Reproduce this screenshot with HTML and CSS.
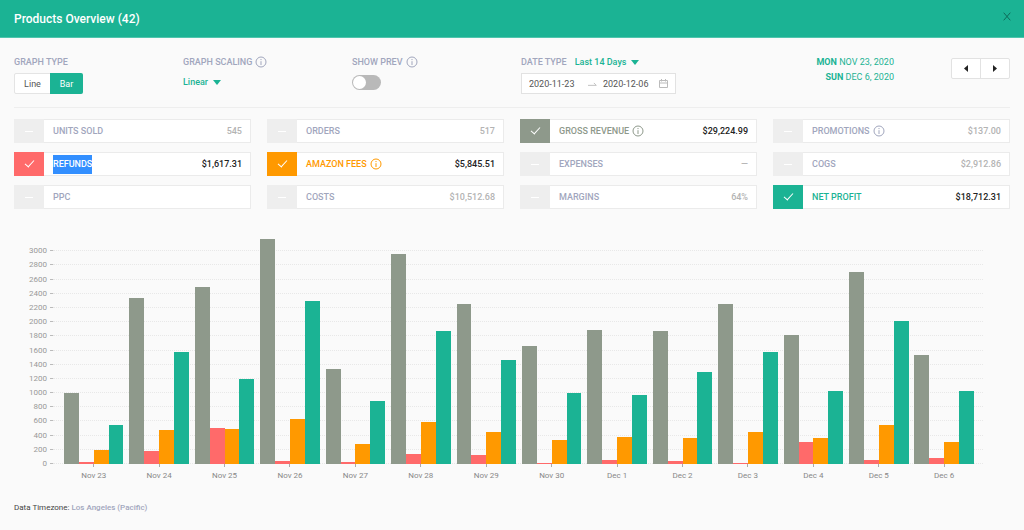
FILE: index.html
```html
<!DOCTYPE html>
<html lang="en">
<head>
<meta charset="utf-8">
<title>Products Overview</title>
<link rel="stylesheet" href="styles.css">
</head>
<body>
<svg class="defs" aria-hidden="true">
  <symbol id="info" viewBox="0 0 12 12"><circle cx="6" cy="6" r="5" fill="none" stroke="currentColor"/><path d="M6 5.2V9M6 3V4.1" stroke="currentColor" fill="none"/></symbol>
</svg>
<header class="header">
  <h1 class="title">Products Overview (42)</h1>
  <button class="close" aria-label="Close"><svg viewBox="0 0 8 9"><path d="M.7.7 7.3 8.3M7.3.7.7 8.3" fill="none" stroke="currentColor"/></svg></button>
</header>
<main class="main">
  <section class="filters">
    <div class="field">
      <div class="caption">GRAPH TYPE</div>
      <div class="segment"><button class="seg">Line</button><button class="seg seg-on">Bar</button></div>
    </div>
    <div class="field">
      <div class="caption"><label for="scaling">GRAPH SCALING</label><svg class="info"><use href="#info"/></svg></div>
      <span class="drop drop-low"><select id="scaling"><option>Linear</option></select></span>
    </div>
    <div class="field">
      <div class="caption"><label for="prev">SHOW PREV</label><svg class="info"><use href="#info"/></svg></div>
      <input class="switch" type="checkbox" id="prev">
    </div>
    <div class="field">
      <div class="caption"><label for="range">DATE TYPE</label><span class="drop"><select id="range"><option>Last 14 Days</option></select></span></div>
      <div class="dates">
        <input type="text" value="2020-11-23" aria-label="Start date">
        <svg class="arrow" viewBox="0 0 10 6"><path d="M0 4.5H9.2L6.5 1.8" fill="none" stroke="currentColor"/></svg>
        <input type="text" value="2020-12-06" aria-label="End date">
        <svg class="calendar" viewBox="0 0 9 9"><path d="M.5 1.5H8.5V8.5H.5ZM.5 4H8.5M2.5 0V2.5M6.5 0V2.5" fill="none" stroke="currentColor"/></svg>
      </div>
    </div>
    <div class="period"><div><b>MON</b> NOV 23, 2020</div><div><b>SUN</b> DEC 6, 2020</div></div>
    <div class="pager">
      <button aria-label="Previous"><svg viewBox="0 0 4 7"><path d="M4 0V7L0 3.5Z" fill="currentColor"/></svg></button><button aria-label="Next"><svg viewBox="0 0 4 7"><path d="M0 0V7L4 3.5Z" fill="currentColor"/></svg></button>
    </div>
  </section>
  <section class="metrics">
    <label class="metric"><input type="checkbox"><span class="name">UNITS SOLD</span><span class="value">545</span></label>
    <label class="metric"><input type="checkbox"><span class="name">ORDERS</span><span class="value">517</span></label>
    <label class="metric gross"><input type="checkbox" checked><span class="name">GROSS REVENUE</span><svg class="info"><use href="#info"/></svg><span class="value">$29,224.99</span></label>
    <label class="metric"><input type="checkbox"><span class="name">PROMOTIONS</span><svg class="info"><use href="#info"/></svg><span class="value">$137.00</span></label>
    <label class="metric refunds"><input type="checkbox" checked><span class="name selected">REFUNDS</span><span class="value">$1,617.31</span></label>
    <label class="metric fees"><input type="checkbox" checked><span class="name">AMAZON FEES</span><svg class="info"><use href="#info"/></svg><span class="value">$5,845.51</span></label>
    <label class="metric"><input type="checkbox"><span class="name">EXPENSES</span><span class="value">—</span></label>
    <label class="metric"><input type="checkbox"><span class="name">COGS</span><span class="value">$2,912.86</span></label>
    <label class="metric"><input type="checkbox"><span class="name">PPC</span></label>
    <label class="metric"><input type="checkbox"><span class="name">COSTS</span><span class="value">$10,512.68</span></label>
    <label class="metric"><input type="checkbox"><span class="name">MARGINS</span><span class="value">64%</span></label>
    <label class="metric profit"><input type="checkbox" checked><span class="name">NET PROFIT</span><span class="value">$18,712.31</span></label>
  </section>
  <section class="chart">
    <div class="scale">
      <div><span>3000</span></div><div><span>2800</span></div><div><span>2600</span></div><div><span>2400</span></div>
      <div><span>2200</span></div><div><span>2000</span></div><div><span>1800</span></div><div><span>1600</span></div>
      <div><span>1400</span></div><div><span>1200</span></div><div><span>1000</span></div><div><span>800</span></div>
      <div><span>600</span></div><div><span>400</span></div><div><span>200</span></div><div><span>0</span></div>
    </div>
    <div class="bars">
      <div class="day"><i class="gross" style="height:31.2%"></i><i class="refunds" style="height:.8%"></i><i class="fees" style="height:6.1%"></i><i class="profit" style="height:17.2%"></i></div>
      <div class="day"><i class="gross" style="height:73.1%"></i><i class="refunds" style="height:5.6%"></i><i class="fees" style="height:14.8%"></i><i class="profit" style="height:49.3%"></i></div>
      <div class="day"><i class="gross" style="height:77.8%"></i><i class="refunds" style="height:15.8%"></i><i class="fees" style="height:15.6%"></i><i class="profit" style="height:37.4%"></i></div>
      <div class="day"><i class="gross" style="height:99.1%"></i><i class="refunds" style="height:1.2%"></i><i class="fees" style="height:19.8%"></i><i class="profit" style="height:71.6%"></i></div>
      <div class="day"><i class="gross" style="height:41.9%"></i><i class="refunds" style="height:.8%"></i><i class="fees" style="height:8.6%"></i><i class="profit" style="height:27.7%"></i></div>
      <div class="day"><i class="gross" style="height:92.7%"></i><i class="refunds" style="height:4.2%"></i><i class="fees" style="height:18.7%"></i><i class="profit" style="height:58.5%"></i></div>
      <div class="day"><i class="gross" style="height:70.7%"></i><i class="refunds" style="height:3.9%"></i><i class="fees" style="height:14.1%"></i><i class="profit" style="height:45.7%"></i></div>
      <div class="day"><i class="gross" style="height:52.1%"></i><i class="refunds" style="height:.3%"></i><i class="fees" style="height:10.5%"></i><i class="profit" style="height:31.2%"></i></div>
      <div class="day"><i class="gross" style="height:59.1%"></i><i class="refunds" style="height:1.7%"></i><i class="fees" style="height:11.8%"></i><i class="profit" style="height:30.6%"></i></div>
      <div class="day"><i class="gross" style="height:58.4%"></i><i class="refunds" style="height:1.4%"></i><i class="fees" style="height:11.6%"></i><i class="profit" style="height:40.7%"></i></div>
      <div class="day"><i class="gross" style="height:70.3%"></i><i class="refunds" style="height:.3%"></i><i class="fees" style="height:14.1%"></i><i class="profit" style="height:49.5%"></i></div>
      <div class="day"><i class="gross" style="height:56.8%"></i><i class="refunds" style="height:9.9%"></i><i class="fees" style="height:11.3%"></i><i class="profit" style="height:32.2%"></i></div>
      <div class="day"><i class="gross" style="height:84.5%"></i><i class="refunds" style="height:1.7%"></i><i class="fees" style="height:17%"></i><i class="profit" style="height:62.8%"></i></div>
      <div class="day"><i class="gross" style="height:48.1%"></i><i class="refunds" style="height:2.8%"></i><i class="fees" style="height:9.6%"></i><i class="profit" style="height:32%"></i></div>
    </div>
  </section>
  <div class="days">
    <span>Nov 23</span><span>Nov 24</span><span>Nov 25</span><span>Nov 26</span><span>Nov 27</span><span>Nov 28</span><span>Nov 29</span><span>Nov 30</span><span>Dec 1</span><span>Dec 2</span><span>Dec 3</span><span>Dec 4</span><span>Dec 5</span><span>Dec 6</span>
  </div>
  <footer class="footer">Data Timezone: <b>Los Angeles (Pacific)</b></footer>
</main>
</body>
</html>
```
FILE: styles.css
```css
* { box-sizing: border-box; }
body { margin: 0; background: #fafafa; color: #555; font: 9px/12px Roboto, "Open Sans", sans-serif; }
button, input, select { margin: 0; padding: 0; border: 0; background: none; color: inherit; font: inherit; }
.defs { position: absolute; width: 0; height: 0; }
.header { display: flex; justify-content: space-between; height: 38px; padding: 0 12px 0 14px; background: #1bb394; border-bottom: 1px solid #4fc5ad; }
.title { margin: 0; font-size: 12px; line-height: 38px; font-weight: 500; color: #fff; }
.close { width: 9px; height: 32px; color: #0f6b59; }
.close svg { display: block; width: 8px; height: 9px; }
.main { padding: 0 14px; }

.filters { display: flex; height: 70px; padding-top: 18px; border-bottom: 1px solid #eee; }
.field { width: 169px; }
.caption { display: flex; align-items: center; height: 12px; margin-bottom: 5px; font-weight: 500; color: #a1a6bd; }
.info { flex: none; width: 12px; height: 12px; margin-left: 3px; }
.segment { display: inline-flex; border: 1px solid #e4e4e4; border-radius: 2px; background: #fff; }
.seg { width: 35px; height: 19px; }
.seg-on { width: 33px; margin: -1px -1px -1px 0; height: 21px; border-radius: 0 2px 2px 0; background: #1bb394; color: #fff; }
.drop { display: inline-flex; align-items: center; gap: 4px; color: #1bb394; font-weight: 500; }
.drop select { appearance: none; height: 12px; }
.drop::after { content: ""; border: 4px solid transparent; border-top: 5px solid #1bb394; border-bottom: 0; }
.drop-low { margin-top: 3px; }
.caption .drop { margin-left: 8px; }
.switch { display: block; appearance: none; width: 29px; height: 15px; margin-top: 7px; padding: 1px; border-radius: 8px; background: #b9b9b9; }
.switch::before { content: ""; display: block; width: 13px; height: 13px; border-radius: 50%; background: #fff; }
.switch:checked::before { margin-left: auto; }
.dates { display: flex; align-items: center; width: 155px; height: 21px; padding: 0 7px; border: 1px solid #e2e2e2; background: #fff; color: #555; }
.dates input { width: 56px; height: 19px; }
.dates .arrow { flex: none; width: 9px; height: 6px; margin: 0 6px 0 3px; color: #bbb; }
.dates .calendar { flex: none; width: 9px; height: 9px; color: #bbb; }
.period { margin-left: auto; text-align: right; line-height: 15px; color: #1bb394; padding-right: 57px; margin-top: -1px; }
.pager { display: flex; align-self: flex-start; margin-top: 2px; border: 1px solid #e2e2e2; border-radius: 2px; background: #fff; color: #222; }
.pager button { width: 28px; height: 19px; }
.pager button + button { width: 29px; border-left: 1px solid #e2e2e2; }
.pager svg { display: block; width: 4px; height: 7px; margin: 0 auto; }

.metrics { display: grid; grid-template-columns: repeat(4, 1fr); gap: 9px 16px; padding-top: 11px; }
.metric { display: flex; align-items: center; height: 24px; padding-right: 8px; border: 1px solid #ebebeb; background: #fff; color: #a1a6bd; font-weight: 500; }
.metric input { appearance: none; display: grid; place-items: center; flex: none; width: 30px; height: 24px; margin: -1px 9px -1px -1px; background: #eee; }
.metric input::before { content: ""; width: 8px; height: 1px; background: #fff; }
.metric input:checked { background: currentColor; }
.metric input:checked::before { width: 8px; height: 4px; margin-bottom: 3px; border: solid #fff; border-width: 0 0 1px 1px; background: none; transform: rotate(-48deg); }
.metric .value { margin-left: auto; color: #b3b3b3; }
.metric.gross .value, .metric.refunds .value, .metric.fees .value, .metric.profit .value { color: #222; }
.metric .selected { background: #338fff; color: #fff; line-height: 19px; }
.metric.gross { color: #8e998b; }
.metric.refunds { color: #ff6a6a; }
.metric.fees { color: #ff9900; }
.metric.profit { color: #1bb394; }

.chart { position: relative; height: 227px; margin: 28px 27px 0 16px; }
.scale { display: grid; grid-template-rows: repeat(16, 1fr); height: 100%; color: #999; font-size: 8px; }
.scale div { display: grid; grid-template-columns: 17px 3px 1fr; gap: 0 3px; align-items: end; }
.scale span { justify-self: end; transform: translateY(50%); }
.scale div::before { content: ""; order: 1; height: 1px; background: #bbb; }
.scale div::after { content: ""; order: 2; margin-left: -3px; border-bottom: 1px dotted #e8e8e8; }
.bars { position: absolute; inset: 0 6px 0 31px; display: flex; }
.day { display: flex; flex: 1; align-items: flex-end; padding: 0 3px; }
.day i { flex: 1; }
i.gross { background: #8e998b; }
i.refunds { background: #ff6a6a; }
i.fees { background: #ff9900; }
i.profit { background: #1bb394; }
.days { display: flex; margin: 0 33px 0 47px; color: #888; font-size: 8px; }
.days span { flex: 1; text-align: center; }
.days span::before { content: ""; display: block; width: 1px; height: 3px; margin: 0 auto 3px; background: #aaa; }
.footer { padding: 20px 0 16px; color: #444; font-size: 8px; }
.footer b { color: #a1a6bd; font-weight: 500; }
```
